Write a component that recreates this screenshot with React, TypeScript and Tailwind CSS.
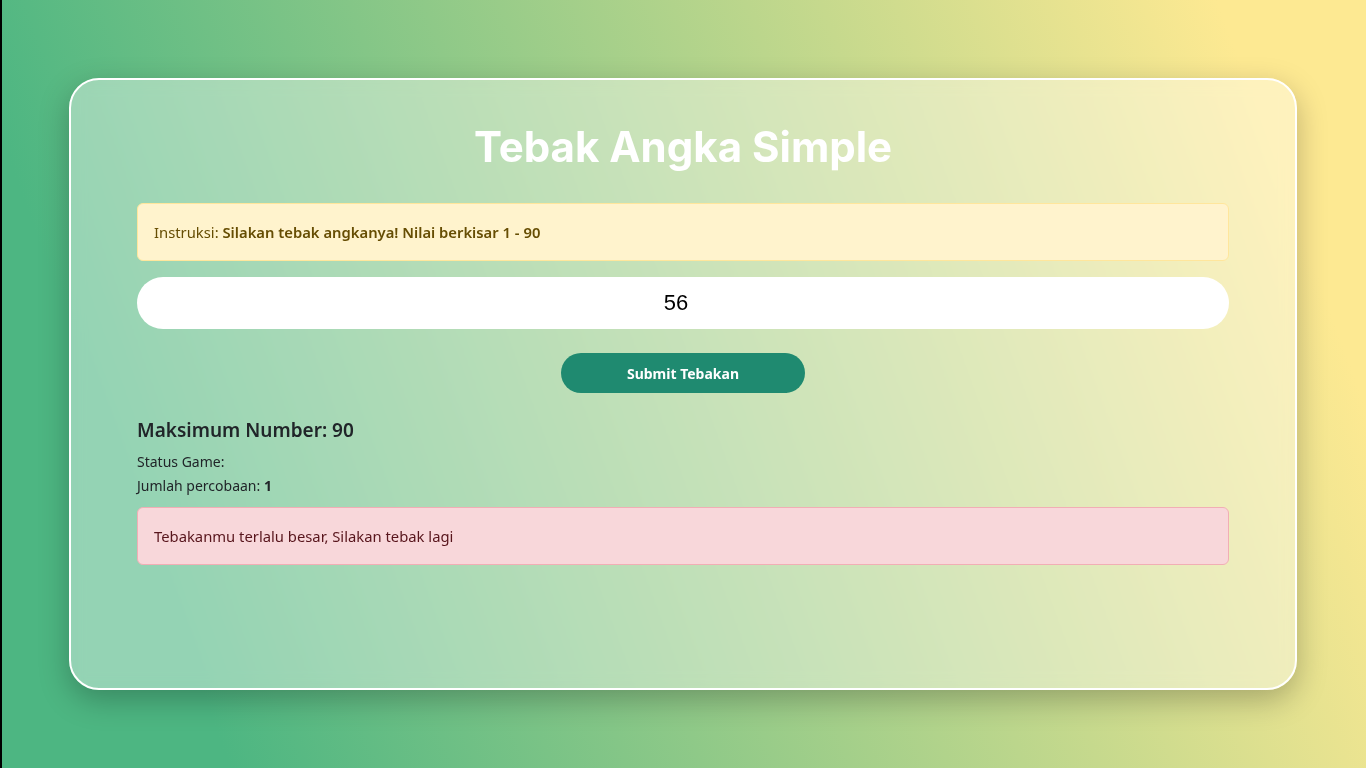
import React from "react";

export default function App() {
  return (
    <div
      className="relative flex h-[768px] w-full items-center justify-center bg-[linear-gradient(70deg,#4db682_14%,#fde992_91%)]"
      style={{ fontFamily: '"Noto Sans", "Open Sans", sans-serif' }}
    >
      <div className="absolute left-0 top-0 h-full w-[2px] bg-black" />
      <div className="flex h-[612px] w-[1228px] flex-col rounded-[30px] border-2 border-white bg-white/40 px-[66px] pt-[42px] shadow-[0_10px_30px_rgba(0,0,0,0.25)] backdrop-blur-sm">
        <h1
          className="mb-[31px] text-center text-[42px] font-bold leading-[50px] text-white"
          style={{ fontFamily: 'Inter, "DejaVu Sans", sans-serif' }}
        >
          Tebak Angka Simple
        </h1>
        <div className="rounded-[6px] border border-[#ffe69c] bg-[#fff3cd] px-4 py-4 text-[14.8px] leading-6 text-[#664d03]">
          Instruksi: <b className="font-semibold">Silakan tebak angkanya! Nilai berkisar 1 - 90</b>
        </div>
        <input
          readOnly
          value="56"
          className="mt-4 h-[52px] w-full rounded-full bg-white pr-[14px] text-center text-[22px] text-black outline-none"
          style={{ fontFamily: '"Liberation Sans", Arial, sans-serif' }}
        />
        <div className="mt-6 flex justify-center">
          <button className="h-10 w-[244px] rounded-full bg-[#1f8a70] text-[14px] font-bold text-white">
            Submit Tebakan
          </button>
        </div>
        <h2 className="mt-[25px] mb-2 text-[19px] font-semibold leading-6 text-[#212529]">
          Maksimum Number: 90
        </h2>
        <div className="text-[14px] leading-6 text-[#212529]">Status Game:</div>
        <div className="text-[14px] leading-6 text-[#212529]">
          Jumlah percobaan: <b>1</b>
        </div>
        <div className="mt-[9px] rounded-[6px] border border-[#f1aeb5] bg-[#f8d7da] px-4 py-4 text-[14.8px] leading-6 text-[#58151c]">
          Tebakanmu terlalu besar, Silakan tebak lagi
        </div>
      </div>
    </div>
  );
}
